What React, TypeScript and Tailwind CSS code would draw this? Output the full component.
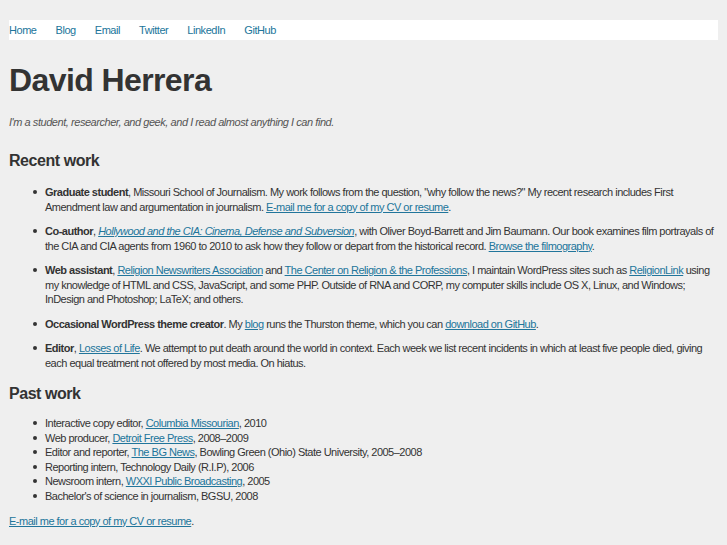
const font = "font-['Liberation_Sans',Arial,sans-serif]";

const bullet =
  "relative before:absolute before:left-[-12px] before:top-[5px] before:h-[4px] before:w-[4px] before:rounded-full before:bg-[#333] before:content-['']";

function A({ children, italic }: { children: React.ReactNode; italic?: boolean }) {
  return (
    <a href="#" className={`text-[#21759b] underline ${italic ? "italic" : ""}`}>
      {children}
    </a>
  );
}

const navLinks = ["Home", "Blog", "Email", "Twitter", "LinkedIn", "GitHub"];

export default function App() {
  return (
    <div
      className={`min-h-screen bg-[#efefef] px-[9px] pt-[20px] text-[11px] tracking-[-0.5px] text-[#333] ${font}`}
    >
      <nav className="flex h-[20px] items-center gap-[19px] bg-white">
        {navLinks.map((link) => (
          <a key={link} href="#" className="text-[11px] leading-[18px] tracking-[-0.45px] text-[#21759b]">
            {link}
          </a>
        ))}
      </nav>

      <h1 className="mt-[21px] text-[32px] font-bold leading-[38px] tracking-[-0.6px] text-[#333]">David Herrera</h1>
      <p className="mt-[16px] italic leading-[14px] tracking-[-0.45px] text-[#555]">
        I&apos;m a student, researcher, and geek, and I read almost anything I can find.
      </p>

      <h2 className="mt-[22px] text-[16px] font-bold leading-[20px] tracking-[-0.45px]">Recent work</h2>
      <ul className="mt-[14px] flex flex-col gap-[10px] pl-[36px] leading-[14.5px]">
        <li className={bullet}>
          <b>Graduate student</b>, Missouri School of Journalism. My work follows from the question, &quot;why follow the
          news?&quot; My recent research includes First Amendment law and argumentation in journalism.{" "}
          <A>E-mail me for a copy of my CV or resume</A>.
        </li>
        <li className={bullet}>
          <b>Co-author</b>, <A italic>Hollywood and the CIA: Cinema, Defense and Subversion</A>, with Oliver Boyd-Barrett
          and Jim Baumann. Our book examines film portrayals of the CIA and CIA agents from 1960 to 2010 to ask how they
          follow or depart from the historical record. <A>Browse the filmography</A>.
        </li>
        <li className={bullet}>
          <b>Web assistant</b>, <A>Religion Newswriters Association</A> and <A>The Center on Religion &amp; the Professions</A>, I
          maintain WordPress sites such as <A>ReligionLink</A> using my knowledge of HTML and CSS, JavaScript, and some PHP.
          Outside of RNA and CORP, my computer skills include OS X, Linux, and Windows; InDesign and Photoshop; LaTeX; and
          others.
        </li>
        <li className={bullet}>
          <b>Occasional WordPress theme creator</b>. My <A>blog</A> runs the Thurston theme, which you can{" "}
          <A>download on GitHub</A>.
        </li>
        <li className={bullet}>
          <b>Editor</b>, <A>Losses of Life</A>. We attempt to put death around the world in context. Each week we list recent
          incidents in which at least five people died, giving each equal treatment not offered by most media. On hiatus.
        </li>
      </ul>

      <h2 className="mt-[14px] text-[16px] font-bold leading-[20px] tracking-[-0.45px]">Past work</h2>
      <ul className="mt-[12px] flex flex-col pl-[36px] leading-[14.6px]">
        <li className={bullet}>
          Interactive copy editor, <A>Columbia Missourian</A>, 2010
        </li>
        <li className={bullet}>
          Web producer, <A>Detroit Free Press</A>, 2008–2009
        </li>
        <li className={bullet}>
          Editor and reporter, <A>The BG News</A>, Bowling Green (Ohio) State University, 2005–2008
        </li>
        <li className={bullet}>Reporting intern, Technology Daily (R.I.P), 2006</li>
        <li className={bullet}>
          Newsroom intern, <A>WXXI Public Broadcasting</A>, 2005
        </li>
        <li className={bullet}>Bachelor&apos;s of science in journalism, BGSU, 2008</li>
      </ul>
      <p className="mt-[10px] leading-[14px]">
        <A>E-mail me for a copy of my CV or resume</A>.
      </p>
      <h2 className="mt-[14px] text-[16px] font-bold leading-[20px] tracking-[-0.45px]">Side projects</h2>
    </div>
  );
}
